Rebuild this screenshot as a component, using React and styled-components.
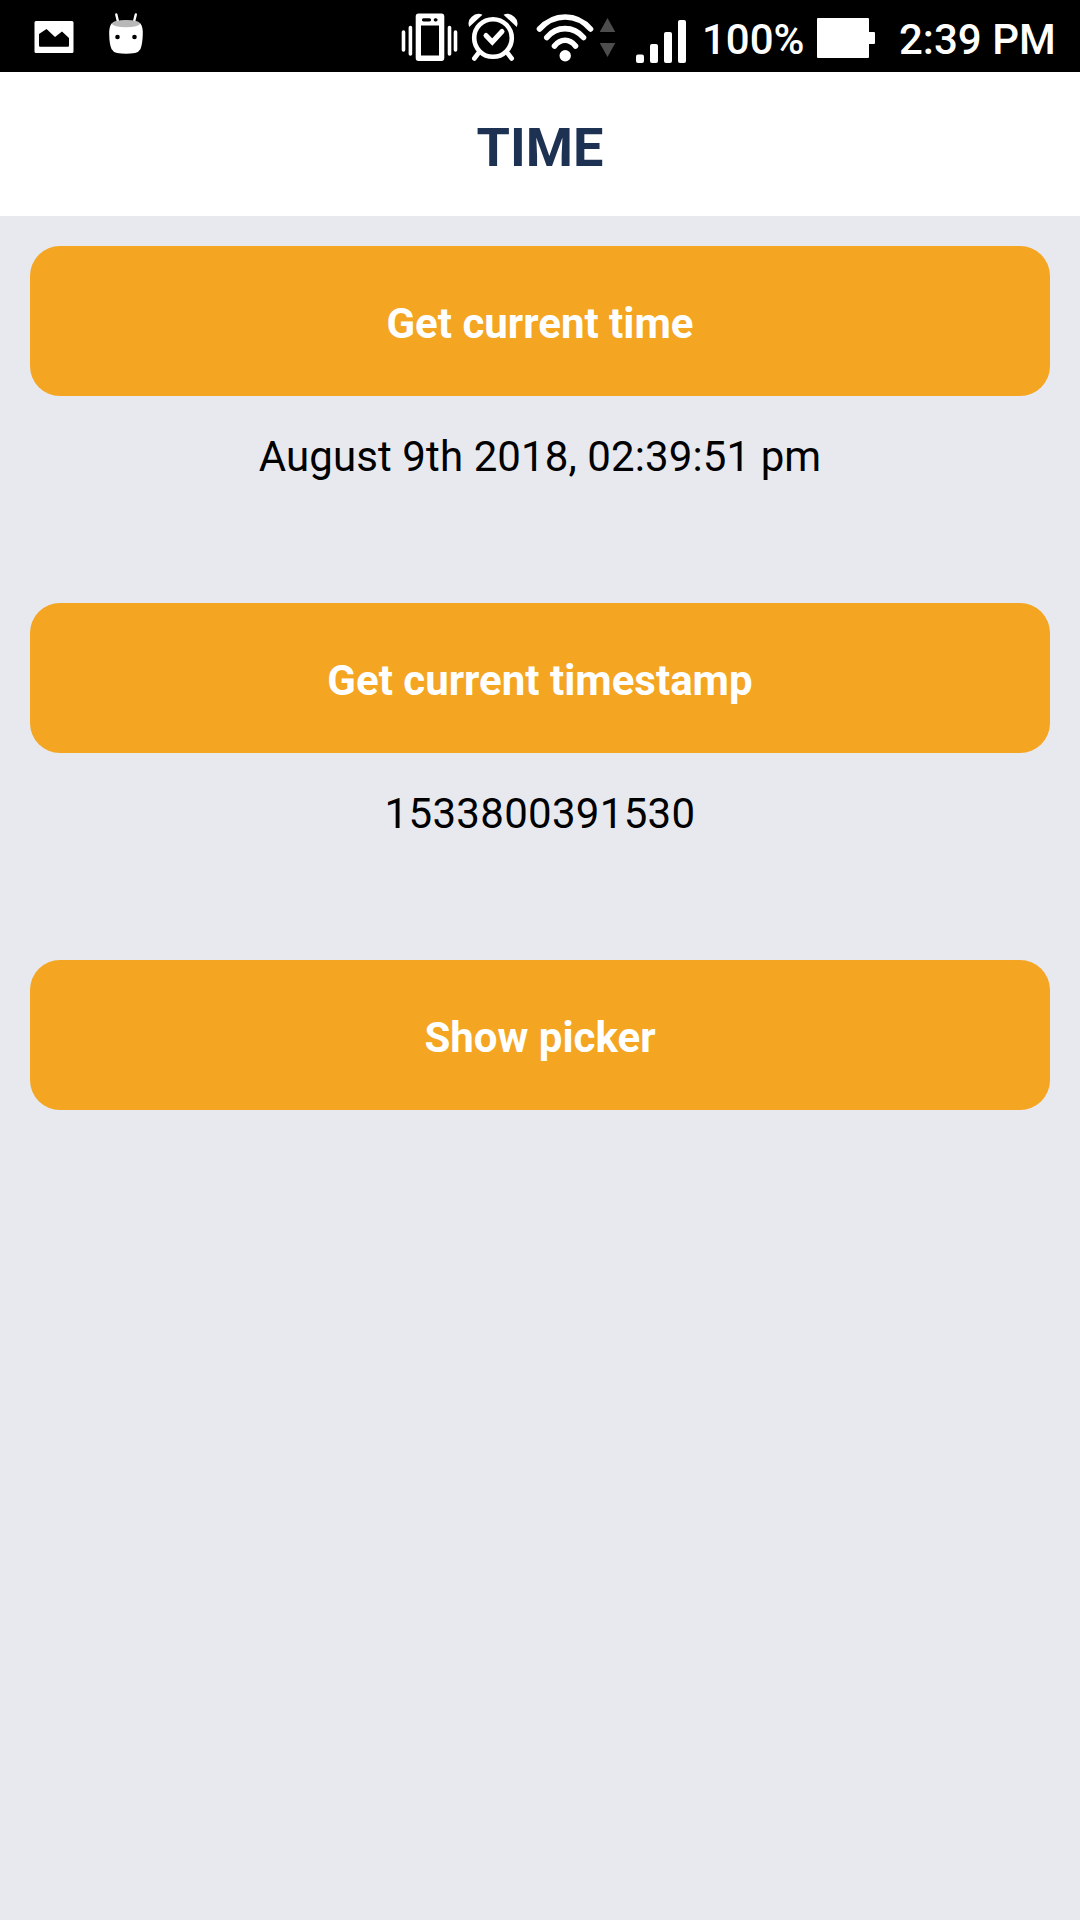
import React from "react";
import styled, { createGlobalStyle } from "styled-components";

const GlobalStyle = createGlobalStyle`
  * { box-sizing: border-box; }
  body {
    margin: 0;
    background: #e8e9ee;
    font-family: Roboto, "Liberation Sans", sans-serif;
  }
`;

const Screen = styled.div`
  display: flex;
  flex-direction: column;
  width: 1080px;
  height: 1920px;
  background: #e8e9ee;
`;

const StatusBar = styled.div`
  display: flex;
  justify-content: space-between;
  height: 72px;
  padding: 0 25px 0 34px;
  background: #000;
  color: #fff;
`;

const StatusGroup = styled.div`
  display: flex;
  align-items: flex-start;
  gap: ${({ $gap }) => $gap}px;
`;

const Glyph = styled.svg`
  display: block;
  flex: none;
  width: ${({ $width }) => $width}px;
  height: 72px;
`;

const StatusText = styled.span`
  width: ${({ $width }) => $width}px;
  padding-top: 15px;
  font-size: 42px;
  font-weight: 500;
  line-height: 50px;
  white-space: nowrap;
`;

const Header = styled.header`
  display: flex;
  align-items: center;
  justify-content: center;
  height: 144px;
  padding-top: 8px;
  background: #fff;
`;

const Title = styled.h1`
  margin: 0;
  color: #1d3152;
  font-size: 54px;
  font-weight: 700;
  line-height: 64px;
`;

const Content = styled.main`
  display: flex;
  flex-direction: column;
  gap: 121px;
  padding: 30px;
`;

const Section = styled.section`
  display: flex;
  flex-direction: column;
  gap: 36px;
`;

const ActionButton = styled.button`
  height: 150px;
  padding: 6px 0 0;
  border: 0;
  border-radius: 30px;
  background: #f4a522;
  color: #fff;
  font-family: inherit;
  font-size: 42px;
  font-weight: 700;
  line-height: 50px;
`;

const Result = styled.p`
  margin: 0;
  color: #000;
  font-size: 42px;
  line-height: 50px;
  letter-spacing: ${({ $spacing }) => $spacing}px;
  text-align: center;
`;

/* Every glyph shares the bar's 72px height and its own slice of the x axis. */
function Icon({ x, width, children }) {
  return (
    <Glyph $width={width} viewBox={`${x} 0 ${width} 72`} fill="#fff" aria-hidden="true">
      {children}
    </Glyph>
  );
}

const PictureIcon = () => (
  <Icon x={34} width={40}>
    <path
      fillRule="evenodd"
      d="M36 21H72Q73.500 21 73.500 22.500V51.500Q73.500 53 72 53H36Q34.500 53 34.500 51.500V22.500Q34.500 21 36 21ZM39 34L46.500 29L55 37L62 31.500L69 38V45.500Q69 46.700 68 46.700H40Q39 46.700 39 45.500Z"
    />
  </Icon>
);

const RobotIcon = () => (
  <Icon x={108} width={36}>
    <path d="M116.300 14.500L118.300 23M135.800 14.500L133.700 23" stroke="#fff" strokeWidth="2.400" strokeLinecap="round" />
    <path d="M111.500 23.500Q126 17.500 140.500 23.500Q143 27 142.800 34Q142.500 44 140.500 49Q139 52 135 53Q126 54.500 117 53Q113 52 111.500 49Q109.300 44 109.200 34Q109 27 111.500 23.500Z" />
    <ellipse cx="126" cy="23.600" rx="14" ry="3.700" fill="#b8b8b8" />
    <circle cx="117.500" cy="37" r="2.300" fill="#000" />
    <circle cx="134.500" cy="37" r="2.300" fill="#000" />
  </Icon>
);

const VibrateIcon = () => (
  <Icon x={401} width={58}>
    <path
      fillRule="evenodd"
      d="M418.500 13.500H441.500Q444.300 13.500 444.300 16.500V58Q444.300 61 441.500 61H418.500Q415.700 61 415.700 58V16.500Q415.700 13.500 418.500 13.500ZM421 25.500V55.500H439V25.500Z"
    />
    <path d="M423.500 19.800H429.500M435.300 19.800H436" stroke="#000" strokeWidth="3.200" strokeLinecap="round" />
    <path d="M403.500 32V50M410.400 27.500V54M449.500 27.500V54M455.500 32V50" stroke="#fff" strokeWidth="3.600" strokeLinecap="round" />
  </Icon>
);

const AlarmIcon = () => (
  <Icon x={467} width={52}>
    <circle cx="493" cy="38" r="18.800" fill="none" stroke="#fff" strokeWidth="4.600" />
    <path d="M469.200 27Q467 21 471.500 17Q476.500 12 482.500 14.700ZM516.800 27Q519 21 514.500 17Q509.500 12 503.500 14.700Z" />
    <path d="M478.500 53L474.300 58.500M507.500 53L511.700 58.500" stroke="#fff" strokeWidth="4.600" strokeLinecap="round" />
    <path d="M486 35.500L492.300 42L502 31.500" fill="none" stroke="#fff" strokeWidth="5" strokeLinecap="round" strokeLinejoin="miter" />
  </Icon>
);

const WifiIcon = () => (
  <Icon x={535} width={60}>
    <g fill="none" stroke="#fff" strokeWidth="5.600" strokeLinecap="round">
      <path d="M539.500 29Q550.500 17 565.200 17Q580 17 590.500 29" />
      <path d="M546.800 37.500Q554 28.600 565 28.600Q576 28.600 583.500 37.500" />
      <path d="M554.500 46Q559 40.300 565 40.300Q571 40.300 575.500 46" />
    </g>
    <circle cx="565.200" cy="55.700" r="5.700" />
  </Icon>
);

const TrafficIcon = () => (
  <Icon x={599} width={18}>
    <path d="M607.500 18L615.300 32H599.700ZM599.700 43H615.300L607.500 57Z" fill="#4d4d4d" />
  </Icon>
);

const SignalIcon = () => (
  <Icon x={633} width={53}>
    <rect x="636" y="54.500" width="8" height="8.500" rx="2" />
    <rect x="650" y="44" width="8" height="19" rx="2" />
    <rect x="664" y="32" width="8" height="31" rx="2" />
    <rect x="678" y="20" width="8" height="43" rx="2" />
  </Icon>
);

const BatteryIcon = () => (
  <Icon x={817} width={58}>
    <path d="M818 18H868Q869 18 869 19V32H874Q875 32 875 33V43Q875 44 874 44H869V57Q869 58 868 58H818Q817 58 817 57V19Q817 18 818 18Z" />
  </Icon>
);

const actions = [
  { label: "Get current time", result: "August 9th 2018, 02:39:51 pm", spacing: 0.1 },
  { label: "Get current timestamp", result: "1533800391530", spacing: 0.3 },
  { label: "Show picker" },
];

export default function App() {
  return (
    <>
      <GlobalStyle />
      <Screen>
        <StatusBar>
          <StatusGroup $gap={34}>
            <PictureIcon />
            <RobotIcon />
          </StatusGroup>
          <StatusGroup $gap={24}>
            <StatusGroup $gap={16}>
              <StatusGroup $gap={8}>
                <VibrateIcon />
                <AlarmIcon />
              </StatusGroup>
              <StatusGroup $gap={4}>
                <WifiIcon />
                <TrafficIcon />
              </StatusGroup>
              <SignalIcon />
              <StatusGroup $gap={9}>
                <StatusText $width={106}>100%</StatusText>
                <BatteryIcon />
              </StatusGroup>
            </StatusGroup>
            <StatusText $width={156}>2:39 PM</StatusText>
          </StatusGroup>
        </StatusBar>
        <Header>
          <Title>TIME</Title>
        </Header>
        <Content>
          {actions.map(({ label, result, spacing }) => (
            <Section key={label}>
              <ActionButton type="button">{label}</ActionButton>
              {result && <Result $spacing={spacing}>{result}</Result>}
            </Section>
          ))}
        </Content>
      </Screen>
    </>
  );
}
